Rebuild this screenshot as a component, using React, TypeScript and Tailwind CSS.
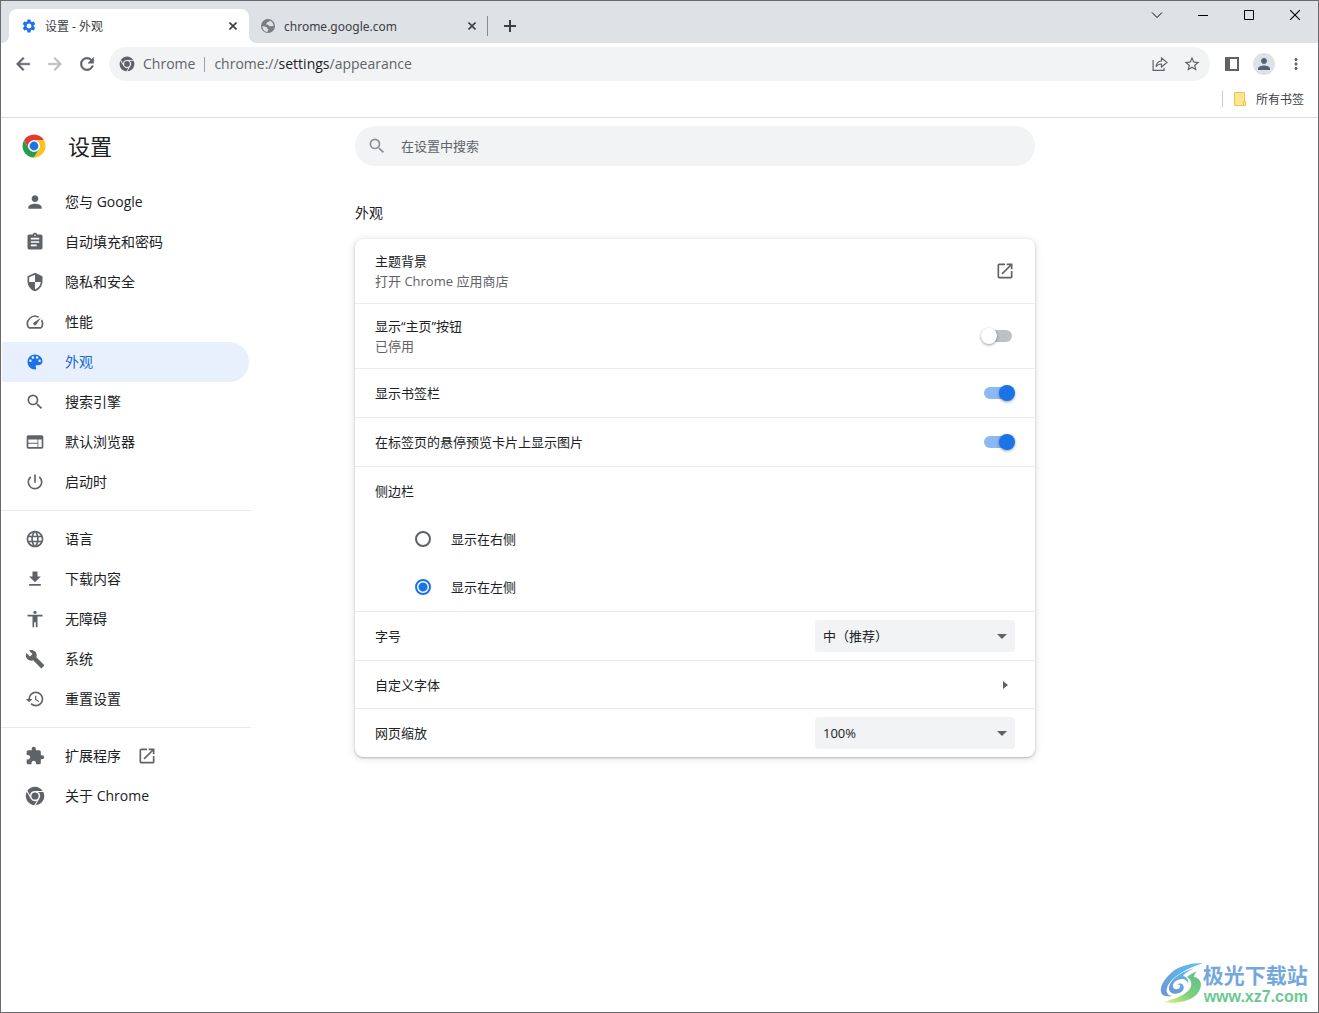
import React, { useState } from 'react';
import {
  MdAccessibility,
  MdAssignment,
  MdBuild,
  MdExtension,
  MdHistory,
  MdLanguage,
  MdMoreVert,
  MdOpenInNew,
  MdPerson,
  MdPowerSettingsNew,
  MdSearch,
  MdSecurity,
  MdSettings,
  MdStarBorder,
  MdWeb,
} from 'react-icons/md';

interface IconProps {
  size?: number;
  className?: string;
}

const ChromeGlyph: React.FC<IconProps> = ({ size = 20, className }) => {
  const blade =
    'M12 5.4H22.02A12 12 0 0 0 2.09 5.23L5.47 11.08A6.6 6.6 0 0 1 12 5.4Z';
  return (
    <svg
      width={size}
      height={size}
      viewBox="-1 -1 26 26"
      fill="currentColor"
      className={className}
      aria-hidden="true"
    >
      <path d={blade} />
      <path d={blade} transform="rotate(120 12 12)" />
      <path d={blade} transform="rotate(240 12 12)" />
      <circle cx="12" cy="12" r="4.7" />
    </svg>
  );
};

const ChromeLogo: React.FC = () => {
  const slice = 'M12 6H22.39A12 12 0 0 0 1.61 6L6.8 15A6 6 0 0 1 12 6Z';
  return (
    <svg width="24" height="24" viewBox="-0.5 -0.5 25 25" aria-hidden="true">
      <path d={slice} fill="#e33b2e" />
      <path d={slice} fill="#fcc31e" transform="rotate(120 12 12)" />
      <path d={slice} fill="#2a9d4a" transform="rotate(240 12 12)" />
      <circle cx="12" cy="12" r="6" fill="#fff" />
      <circle cx="12" cy="12" r="4.6" fill="#1a73e8" />
    </svg>
  );
};

const SpeedIcon: React.FC<IconProps> = ({ size = 20 }) => (
  <svg width={size} height={size} viewBox="0 0 24 24" fill="currentColor">
    <path d="M20.38 8.57l-1.23 1.85a8 8 0 0 1-.22 7.58H5.07A8 8 0 0 1 15.58 6.85l1.85-1.23A10 10 0 0 0 3.35 19a2 2 0 0 0 1.72 1h13.85a2 2 0 0 0 1.74-1 10 10 0 0 0-.27-10.44zm-9.79 6.84a2 2 0 0 0 2.83 0l5.66-8.49-8.49 5.66a2 2 0 0 0 0 2.83z" />
  </svg>
);

const PaletteIcon: React.FC<IconProps> = ({ size = 20 }) => (
  <svg width={size} height={size} viewBox="0 0 24 24" fill="currentColor">
    <path d="M12 3c-4.97 0-9 4.03-9 9s4.03 9 9 9c.83 0 1.5-.67 1.5-1.5 0-.39-.15-.74-.39-1.01-.23-.26-.38-.61-.38-.99 0-.83.67-1.5 1.5-1.5H16c2.76 0 5-2.24 5-5 0-4.42-4.03-8-9-8zm-5.5 9c-.83 0-1.5-.67-1.5-1.5S5.67 9 6.5 9 8 9.67 8 10.5 7.33 12 6.5 12zm3-4C8.67 8 8 7.33 8 6.5S8.67 5 9.5 5s1.5.67 1.5 1.5S10.33 8 9.5 8zm5 0c-.83 0-1.5-.67-1.5-1.5S13.67 5 14.5 5s1.5.67 1.5 1.5S15.33 8 14.5 8zm3 4c-.83 0-1.5-.67-1.5-1.5S16.67 9 17.5 9s1.5.67 1.5 1.5-.67 1.5-1.5 1.5z" />
  </svg>
);

const DownloadIcon: React.FC<IconProps> = ({ size = 20 }) => (
  <svg width={size} height={size} viewBox="0 0 24 24" fill="currentColor">
    <path d="M19 9h-4V3H9v6H5l7 7 7-7zM5 18v2h14v-2H5z" />
  </svg>
);

const BackIcon: React.FC<IconProps> = ({ size = 20, className }) => (
  <svg
    width={size}
    height={size}
    viewBox="0 0 24 24"
    fill="currentColor"
    stroke="currentColor"
    strokeWidth="0.6"
    className={className}
  >
    <path d="M20 11H7.83l5.59-5.59L12 4l-8 8 8 8 1.41-1.41L7.83 13H20v-2z" />
  </svg>
);

const ReloadIcon: React.FC<IconProps> = ({ size = 20 }) => (
  <svg
    width={size}
    height={size}
    viewBox="0 0 24 24"
    fill="currentColor"
    stroke="currentColor"
    strokeWidth="0.6"
  >
    <path d="M17.65 6.35C16.2 4.9 14.21 4 12 4c-4.42 0-7.99 3.58-7.99 8s3.57 8 7.99 8c3.73 0 6.84-2.55 7.73-6h-2.08c-.82 2.33-3.04 4-5.65 4-3.31 0-6-2.69-6-6s2.69-6 6-6c1.66 0 3.14.69 4.22 1.78L13 11h7V4l-2.35 2.35z" />
  </svg>
);

// Default favicon for pages without their own
const GlobeIcon: React.FC = () => (
  <svg width="16" height="16" viewBox="0 0 16 16" aria-hidden="true">
    <circle cx="8" cy="8" r="7" fill="#7b7d80" />
    <path
      d="M2.4 8.2c1.6 0 3 .2 4 .8.8.5.4 1.4 1.3 1.7.8.2.9 1 .3 1.8l-.8 1.4C4.6 13.7 2.5 11.5 2.4 8.2z"
      fill="#dee1e6"
    />
    <path
      d="M9.8 2.6c-.3 1-.9 1.4-1.9 1.5-.9.1-.6 1-1.4 1.3-.7.3-.6 1 .1 1.1 1 .1 1.7.2 2.3 1 .7.9 1.8 1 2.7.7.8-.2 1.5-.2 2 .1 0-2.6-1.5-4.8-3.8-5.7z"
      fill="#dee1e6"
    />
  </svg>
);

const CloseIcon: React.FC = () => (
  <svg width="8" height="8" viewBox="0 0 8 8" stroke="currentColor">
    <path d="M0.5 0.5L7.5 7.5M7.5 0.5L0.5 7.5" strokeWidth="1.6" />
  </svg>
);

interface NavItem {
  label: string;
  // Latin product name that follows the label in a heavier weight
  product?: string;
  icon: React.ComponentType<IconProps>;
  external?: boolean;
}

const navGroups: NavItem[][] = [
  [
    { label: '您与', product: 'Google', icon: MdPerson },
    { label: '自动填充和密码', icon: MdAssignment },
    { label: '隐私和安全', icon: MdSecurity },
    { label: '性能', icon: SpeedIcon },
    { label: '外观', icon: PaletteIcon },
    { label: '搜索引擎', icon: MdSearch },
    { label: '默认浏览器', icon: MdWeb },
    { label: '启动时', icon: MdPowerSettingsNew },
  ],
  [
    { label: '语言', icon: MdLanguage },
    { label: '下载内容', icon: DownloadIcon },
    { label: '无障碍', icon: MdAccessibility },
    { label: '系统', icon: MdBuild },
    { label: '重置设置', icon: MdHistory },
  ],
  [
    { label: '扩展程序', icon: MdExtension, external: true },
    { label: '关于', product: 'Chrome', icon: ChromeGlyph },
  ],
];

const TabStrip: React.FC = () => (
  <header className="flex h-[42px] items-start bg-[#dee1e6] pl-2 font-['Noto_Sans','Noto_Sans_CJK_SC',sans-serif]">
    <div className="relative mt-2 flex h-[34px] w-60 items-center rounded-t-lg bg-white pr-3 pl-3 before:absolute before:bottom-0 before:-left-2 before:size-2 before:bg-[radial-gradient(circle_at_0_0,transparent_8px,white_8px)] after:absolute after:-right-2 after:bottom-0 after:size-2 after:bg-[radial-gradient(circle_at_100%_0,transparent_8px,white_8px)]">
      <MdSettings size={16} className="text-[#1a73e8]" />
      <button className="ml-2 flex-1 pt-0.5 text-left text-xs text-[#3c4043]">
        设置 - 外观
      </button>
      <button aria-label="关闭标签页" className="text-[#3c4043]">
        <CloseIcon />
      </button>
    </div>
    <div className="mt-2 flex h-[34px] w-[238px] items-center pr-[11px] pl-[11px]">
      <GlobeIcon />
      <button className="ml-2 flex-1 pt-0.5 text-left text-xs text-[#3c4043]">
        chrome.google.com
      </button>
      <button aria-label="关闭标签页" className="text-[#3c4043]">
        <CloseIcon />
      </button>
    </div>
    <div className="mt-[15px] h-5 w-px bg-[#85888d]" />
    <button
      aria-label="新标签页"
      className="mt-2 flex h-[34px] w-11 items-center justify-center text-[#3c4043]"
    >
      <svg width="12" height="12" viewBox="0 0 12 12" fill="currentColor">
        <path d="M5 0h2v5h5v2H7v5H5V7H0V5h5z" />
      </svg>
    </button>
    <div className="ml-auto flex text-black">
      <button aria-label="搜索标签页" className="flex h-7 w-[46px] items-center justify-center">
        <svg width="12" height="12" viewBox="0 0 12 12" fill="none" stroke="currentColor">
          <path d="M1 3.5L6 8.5L11 3.5" />
        </svg>
      </button>
      <button aria-label="最小化" className="flex h-7 w-[46px] items-center justify-center">
        <svg width="10" height="10" viewBox="0 0 10 10" fill="currentColor">
          <path d="M0 5h10v1H0z" />
        </svg>
      </button>
      <button aria-label="最大化" className="flex h-7 w-[46px] items-center justify-center">
        <svg width="10" height="10" viewBox="0 0 10 10" fill="none" stroke="currentColor">
          <path d="M0.5 0.5h9v9h-9z" />
        </svg>
      </button>
      <button aria-label="关闭" className="flex h-7 w-[46px] items-center justify-center">
        <svg width="10" height="10" viewBox="0 0 10 10" stroke="currentColor">
          <path d="M0 0L10 10M10 0L0 10" strokeWidth="1.1" />
        </svg>
      </button>
    </div>
  </header>
);

const Toolbar: React.FC = () => (
  <div className="flex h-[42px] items-center px-[6px] text-[#5f6368]">
    <button aria-label="后退" className="flex size-8 items-center justify-center">
      <BackIcon />
    </button>
    <button
      aria-label="前进"
      disabled
      className="flex size-8 items-center justify-center text-[#babcbe]"
    >
      <BackIcon className="rotate-180" />
    </button>
    <button aria-label="重新加载" className="flex size-8 items-center justify-center">
      <ReloadIcon />
    </button>
    <div className="mx-[6px] flex h-[34px] flex-1 items-center rounded-full bg-[#f1f3f4] pr-[2px] pl-[10px]">
      <button className="flex items-center gap-2 text-sm">
        <ChromeGlyph size={16} />
        Chrome
      </button>
      <div className="mx-[9px] h-[15px] w-px bg-[#9aa0a6]" />
      <label htmlFor="address" className="text-sm">
        chrome://<span className="text-[#202124]">settings</span>/appearance
      </label>
      <input id="address" type="text" className="min-w-0 flex-1 outline-none" />
      <button aria-label="分享此网页" className="flex size-8 items-center justify-center">
        <svg
          width="16"
          height="16"
          viewBox="0 0 16 16"
          fill="none"
          stroke="currentColor"
          strokeWidth="1.2"
        >
          <path d="M1.1 4v10.4h11V12" />
          <path d="M4 10.7c.4-3.6 2.3-5.5 5.5-5.7V2.1l5.5 4.4-5.5 4.4V8C7 8 5.300 8.700 4 10.700z" />
        </svg>
      </button>
      <button aria-label="为此标签页添加书签" className="flex size-8 items-center justify-center">
        <MdStarBorder size={18} />
      </button>
    </div>
    <button aria-label="侧边栏" className="flex size-8 items-center justify-center">
      <svg width="14" height="14" viewBox="0 0 14 14" fill="currentColor">
        <path d="M0 0h14v14H0zM5 2v10h7V2z" fillRule="evenodd" />
      </svg>
    </button>
    <button aria-label="个人资料" className="flex size-8 items-center justify-center">
      <span className="flex size-[22px] items-center justify-center rounded-full bg-[#dee1e6] text-[#53627a]">
        <MdPerson size={18} />
      </span>
    </button>
    <button aria-label="菜单" className="flex size-8 items-center justify-center">
      <MdMoreVert size={18} />
    </button>
  </div>
);

const BookmarkBar: React.FC = () => (
  <div className="flex h-[33px] items-center justify-end border-b border-[#dadce0] pr-[14px] pb-1">
    <div className="h-4 w-px bg-[#c8cacd]" />
    <button className="ml-[11px] flex items-center gap-[10px] text-xs text-[#3c4043]">
      <svg width="12" height="14" viewBox="0 0 12 14" fill="#ffe58f" stroke="#eac54f">
        <path d="M0.5 0.5h10v13h-10z" />
        <path d="M9.5 9.5h2v4h-2z" />
      </svg>
      <span className="pt-0.5">所有书签</span>
    </button>
  </div>
);

interface SidebarProps {
  selected: string;
  onSelect: (label: string) => void;
}

const Sidebar: React.FC<SidebarProps> = ({ selected, onSelect }) => (
  <aside className="w-[250px] shrink-0">
    <div className="flex h-14 items-center gap-[22px] pl-[21px]">
      <ChromeLogo />
      <h1 className="text-[22px] leading-7 text-[#202124]">设置</h1>
    </div>
    <nav className="pt-2">
      {navGroups.map((group, index) => (
        <ul
          key={group[0].label}
          className={index > 0 ? 'mt-2 border-t border-[#e8eaed] pt-2' : ''}
        >
          {group.map(({ label, product, icon: Icon, external }) => {
            const active = label === selected;
            return (
              <li key={label}>
                <a
                  href="#"
                  onClick={() => onSelect(label)}
                  className={`mr-0.5 ml-px flex h-10 items-center rounded-r-full pl-[23px] text-sm ${
                    active
                      ? 'bg-[#e8f0fe] text-[#1967d2]'
                      : 'text-[#202124]'
                  }`}
                >
                  <span className={active ? 'text-[#1a73e8]' : 'text-[#5f6368]'}>
                    <Icon size={20} />
                  </span>
                  <span className="ml-5">
                    {label}
                    {product && <span className="font-medium"> {product}</span>}
                  </span>
                  {external && (
                    <MdOpenInNew size={20} className="ml-4 text-[#5f6368]" />
                  )}
                </a>
              </li>
            );
          })}
        </ul>
      ))}
    </nav>
  </aside>
);

interface ToggleProps {
  id: string;
  defaultChecked?: boolean;
}

const Toggle: React.FC<ToggleProps> = ({ id, defaultChecked }) => (
  <input
    id={id}
    type="checkbox"
    role="switch"
    defaultChecked={defaultChecked}
    className="relative mr-[3px] h-3 w-7 appearance-none rounded-full bg-[#bdc1c6] before:absolute before:-top-0.5 before:-left-[3px] before:size-4 before:rounded-full before:bg-white before:shadow-[0_1px_3px_rgba(0,0,0,0.4)] checked:bg-[#8cb8f3] checked:before:left-[15px] checked:before:bg-[#1a73e8]"
  />
);

interface SelectProps {
  id: string;
  options: string[];
}

const Select: React.FC<SelectProps> = ({ id, options }) => (
  <div className="relative">
    <select
      id={id}
      className="h-8 w-[200px] appearance-none rounded bg-[#f1f3f4] px-2 text-[13px] text-[#202124]"
    >
      {options.map((option) => (
        <option key={option}>{option}</option>
      ))}
    </select>
    <svg
      width="10"
      height="5"
      viewBox="0 0 10 5"
      fill="#5f6368"
      className="pointer-events-none absolute top-[14px] right-2"
    >
      <path d="M0 0h10L5 5z" />
    </svg>
  </div>
);

const rowClass =
  'flex min-h-12 items-center justify-between border-t border-[#ebebeb] px-5 box-content';

const sides = ['显示在右侧', '显示在左侧'];

const AppearancePage: React.FC = () => (
  <main className="ml-[104px] w-full max-w-[680px] min-w-0 pt-2 text-[13px] leading-5 text-[#202124]">
    <div className="flex h-10 items-center rounded-full bg-[#f1f3f4] pl-3">
      <label htmlFor="search" aria-label="搜索设置">
        <MdSearch size={20} className="text-[#8d9195]" />
      </label>
      <input
        id="search"
        type="search"
        placeholder="在设置中搜索"
        className="ml-[14px] flex-1 outline-none placeholder:text-[#5f6368]"
      />
    </div>

    <h2 className="mt-[37px] text-sm leading-5">外观</h2>

    <section className="mt-4 rounded-lg shadow-[0_1px_2px_0_rgba(60,64,67,0.3),0_1px_6px_1px_rgba(60,64,67,0.15)]">
      <a href="#" className="flex h-16 items-center justify-between px-5">
        <span>
          <span className="block">主题背景</span>
          <span className="block text-[#5f6368]">打开 Chrome 应用商店</span>
        </span>
        <MdOpenInNew size={20} className="text-[#5f6368]" />
      </a>
      <div className="flex h-[65px] items-center justify-between border-t border-[#ebebeb] px-5">
        <label htmlFor="home-button">
          <span className="block">显示“主页”按钮</span>
          <span className="block text-[#5f6368]">已停用</span>
        </label>
        <Toggle id="home-button" />
      </div>
      <div className={rowClass}>
        <label htmlFor="bookmarks-bar">显示书签栏</label>
        <Toggle id="bookmarks-bar" defaultChecked />
      </div>
      <div className={rowClass}>
        <label htmlFor="hover-card">在标签页的悬停预览卡片上显示图片</label>
        <Toggle id="hover-card" defaultChecked />
      </div>
      <fieldset className="border-t border-[#ebebeb] px-5">
        <legend className="float-left flex h-12 w-full items-center">侧边栏</legend>
        {sides.map((side, index) => (
          <label
            key={side}
            className="clear-both flex h-12 items-center gap-5 pl-10"
          >
            <input
              type="radio"
              name="side-panel"
              defaultChecked={index === 1}
              className="size-4 appearance-none rounded-full border-2 border-[#5f6368] checked:border-[#1a73e8] checked:bg-[radial-gradient(circle,#1a73e8_4px,transparent_5px)]"
            />
            {side}
          </label>
        ))}
      </fieldset>
      <div className={rowClass}>
        <label htmlFor="font-size">字号</label>
        <Select id="font-size" options={['中（推荐）', '小', '大']} />
      </div>
      <a
        href="#"
        className="flex h-12 items-center justify-between border-t border-[#ebebeb] px-5"
      >
        自定义字体
        <svg width="5" height="8" viewBox="0 0 5 8" fill="#5f6368" className="mr-[7px]">
          <path d="M0 0v8l5-4z" />
        </svg>
      </a>
      <div className={rowClass}>
        <label htmlFor="page-zoom">网页缩放</label>
        <Select id="page-zoom" options={['100%', '125%', '150%']} />
      </div>
    </section>
  </main>
);

const SiteBadge: React.FC = () => (
  <a href="#" className="absolute right-[10px] bottom-[5px] flex items-start">
    <svg width="43" height="42" viewBox="0 0 43 42" aria-hidden="true">
      <defs>
        <linearGradient id="blue" x1="1" y1="0" x2="0" y2="1">
          <stop offset="0" stopColor="#5cc4f0" />
          <stop offset="1" stopColor="#6b95d4" />
        </linearGradient>
        <linearGradient id="green" x1="1" y1="0" x2="0" y2="1">
          <stop offset="0" stopColor="#55bf8c" />
          <stop offset="0.55" stopColor="#7fd07e" />
          <stop offset="1" stopColor="#e6f27a" />
        </linearGradient>
      </defs>
      {/* outer sweep */}
      <path
        d="M43 0C30 0 17 3 9 12 3 18 0 24 1 29c1 4 6 5 11 4-5-1-6-4-5-8C10 15 25 6 43 0z"
        fill="url(#blue)"
      />
      {/* inner curl */}
      <path
        d="M35 5C23 8 11 15 9 24c-1 6 5 8 10 6 4-1 6-5 4-8-1-2-5-2-6 0 2-1 4 0 3 2-1 3-6 3-7 0-1-4 4-8 9-8 3 0 5 2 6 4 1-3-1-6-5-7 2-3 7-6 12-8z"
        fill="url(#blue)"
      />
      {/* tail */}
      <path
        d="M37 8C33 10 29 12 27 14c5 3 6 9 1 14-6 6-15 8-24 11 10 2 24 0 31-6 7-6 8-15 2-18-1-1-2-1-3-1 0-2 1-4 3-6z"
        fill="url(#green)"
      />
    </svg>
    <span className="flex flex-col">
      <span className="text-[21px] leading-6 font-bold text-[#73a8dc]">
        极光下载站
      </span>
      <span className="pl-px font-['Liberation_Sans'] text-[16px] leading-5 font-bold text-[#6cc893]">
        www.xz7.com
      </span>
    </span>
  </a>
);

export default function App() {
  const [selected, setSelected] = useState('外观');

  return (
    <div className="relative flex min-h-screen flex-col border border-[#6a6a6c] bg-white font-['Open_Sans','Noto_Sans_CJK_SC',sans-serif]">
      <TabStrip />
      <Toolbar />
      <BookmarkBar />
      <div className="flex flex-1">
        <Sidebar selected={selected} onSelect={setSelected} />
        <AppearancePage />
      </div>
      <SiteBadge />
    </div>
  );
}
